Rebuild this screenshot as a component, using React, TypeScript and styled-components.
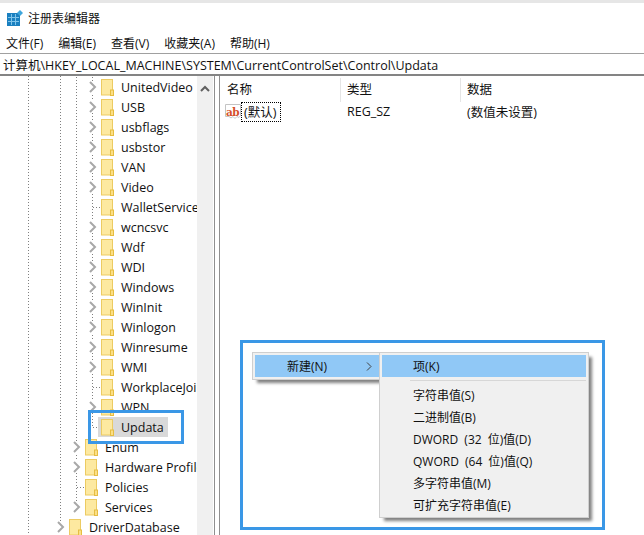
import React from "react";
import styled, { createGlobalStyle } from "styled-components";

const GlobalStyle = createGlobalStyle`
    html, body {
        margin: 0;
        padding: 0;
        background: white;
    }
`;

const UI_FONT = `"Open Sans", "Noto Sans CJK SC", sans-serif`;

type TreeItem = { name: string; expandable: boolean; selected?: boolean };

const controlChildren: TreeItem[] = [
    { name: "UnitedVideo", expandable: true },
    { name: "USB", expandable: true },
    { name: "usbflags", expandable: true },
    { name: "usbstor", expandable: true },
    { name: "VAN", expandable: true },
    { name: "Video", expandable: true },
    { name: "WalletService", expandable: false },
    { name: "wcncsvc", expandable: true },
    { name: "Wdf", expandable: true },
    { name: "WDI", expandable: true },
    { name: "Windows", expandable: true },
    { name: "WinInit", expandable: true },
    { name: "Winlogon", expandable: true },
    { name: "Winresume", expandable: true },
    { name: "WMI", expandable: true },
    { name: "WorkplaceJoin", expandable: false },
    { name: "WPN", expandable: true },
    { name: "Updata", expandable: false, selected: true },
];

const setChildren: TreeItem[] = [
    { name: "Enum", expandable: true },
    { name: "Hardware Profiles", expandable: true },
    { name: "Policies", expandable: false },
    { name: "Services", expandable: true },
];

const newItems = [
    "字符串值(S)",
    "二进制值(B)",
    "DWORD (32 位)值(D)",
    "QWORD (64 位)值(Q)",
    "多字符串值(M)",
    "可扩充字符串值(E)",
];

function RegeditIcon() {
    return (
        <svg width="16" height="16" viewBox="0 0 16 16">
            <rect x="0" y="3" width="13" height="13" fill="#1a80c0" />
            <path d="M1 7.500h11M1 11.500h11M4.500 4v11M8.500 4v11" stroke="#7fc4ea" strokeWidth="1" />
            <path d="M13 0l3 3-3 3-3-3z" fill="#3fa6dc" />
        </svg>
    );
}

function FolderIcon() {
    return (
        <svg width="14" height="17" viewBox="0 0 14 17">
            <rect x="1.500" y="0.500" width="11" height="15.500" fill="#fde9a0" stroke="#eccb62" />
            <rect x="10.500" y="11" width="3" height="5.500" fill="#fbdf86" stroke="#e6bd42" />
        </svg>
    );
}

function ChevronIcon() {
    return (
        <svg width="8" height="12" viewBox="0 0 8 12">
            <path d="M1 1l5 5-5 5" fill="none" stroke="#a8a8a8" strokeWidth="2" />
        </svg>
    );
}

function TreeRow({ item, level }: { item: TreeItem; level: number }) {
    return (
        <Row $level={level}>
            <Expander>{item.expandable ? <ChevronIcon /> : <Connector />}</Expander>
            <Label $selected={item.selected}>
                <FolderIcon />
                <span>{item.name}</span>
            </Label>
        </Row>
    );
}

export default function App() {
    return (
        <Page>
            <GlobalStyle />
            <TitleBar>
                <RegeditIcon />
                <span>注册表编辑器</span>
            </TitleBar>
            <MenuBar>
                <span>文件(F)</span>
                <span>编辑(E)</span>
                <span>查看(V)</span>
                <span>收藏夹(A)</span>
                <span>帮助(H)</span>
            </MenuBar>
            <AddressBar>计算机\HKEY_LOCAL_MACHINE\SYSTEM\CurrentControlSet\Control\Updata</AddressBar>
            <Body>
                <Tree>
                    <Branch $x={76}>
                        <Branch $x={92}>
                            {controlChildren.map((item) => (
                                <TreeRow key={item.name} item={item} level={2} />
                            ))}
                        </Branch>
                        {setChildren.map((item) => (
                            <TreeRow key={item.name} item={item} level={1} />
                        ))}
                    </Branch>
                    <TreeRow item={{ name: "DriverDatabase", expandable: true }} level={0} />
                </Tree>
                <Scrollbar>
                    <svg width="10" height="7" viewBox="0 0 10 7">
                        <path d="M1 6l4-4 4 4" fill="none" stroke="#606060" strokeWidth="2" />
                    </svg>
                </Scrollbar>
                <Splitter />
                <Values>
                    <ColumnHeader>
                        <HeaderCell $width={121} $divider>名称</HeaderCell>
                        <HeaderCell $width={120} $divider>类型</HeaderCell>
                        <HeaderCell $width={120}>数据</HeaderCell>
                    </ColumnHeader>
                    <ValueRow>
                        <NameCell>
                            <StringIcon>
                                <svg width="16" height="17" viewBox="0 0 16 17">
                                    <path d="M0.500 0.500h15v11l-1.500 2-2-1-2 2-2-2-2 1.500-2-1.500h-3.500z" fill="#fff" stroke="#c4c4c4" />
                                </svg>
                                <StringBadge>ab</StringBadge>
                            </StringIcon>
                            <FocusName>(默认)</FocusName>
                        </NameCell>
                        <ValueCell $width={120}>REG_SZ</ValueCell>
                        <ValueCell $width={180}>(数值未设置)</ValueCell>
                    </ValueRow>
                </Values>
            </Body>

            <MarkBox $left={88} $top={410} $width={96} $height={34} />
            <MarkBox $left={240} $top={340} $width={365} $height={190} />

            <ParentMenu>
                <ParentItem>
                    <span>新建(N)</span>
                    <svg width="6" height="9" viewBox="0 0 6 9">
                        <path d="M1 0.500l4 4-4 4" fill="none" stroke="#404040" strokeWidth="1" />
                    </svg>
                </ParentItem>
            </ParentMenu>
            <SubMenu>
                <SubItem $active>项(K)</SubItem>
                <MenuSeparator />
                {newItems.map((text) => (
                    <SubItem key={text}>{text}</SubItem>
                ))}
            </SubMenu>
        </Page>
    );
}

const Page = styled.div`
    position: relative;
    width: 644px;
    height: 535px;
    overflow: hidden;
    display: flex;
    flex-direction: column;
    box-sizing: border-box;
    border-top: 3px solid #e6e6e6;
    background: white;
    color: #111;
    font-family: ${UI_FONT};
    font-size: 12.5px;
`;

const TitleBar = styled.div`
    height: 30px;
    padding-left: 7px;
    display: flex;
    align-items: center;
    gap: 5px;
    font-size: 12px;
`;

const MenuBar = styled.div`
    height: 20px;
    padding-left: 6px;
    display: flex;
    align-items: center;
    gap: 15px;
    font-size: 12px;
`;

const AddressBar = styled.div`
    height: 20px;
    padding-left: 3px;
    display: flex;
    align-items: center;
    border-top: 1px solid #a0a0a0;
    border-bottom: 2px solid #848484;
    white-space: nowrap;
`;

const Body = styled.div`
    flex: 1;
    min-height: 0;
    display: flex;
`;

const Tree = styled.div`
    width: 197px;
    padding-top: 1px;
    overflow: hidden;
    flex-shrink: 0;
    background-image:
        repeating-linear-gradient(to bottom, #808080 0 1px, transparent 1px 3px),
        repeating-linear-gradient(to bottom, #808080 0 1px, transparent 1px 3px);
    background-size: 1px 100%;
    background-repeat: no-repeat;
    background-position: 28px 0, 60px 0;
`;

const Branch = styled.div<{ $x: number }>`
    background-image: repeating-linear-gradient(to bottom, #808080 0 1px, transparent 1px 3px);
    background-size: 1px calc(100% - 10px);
    background-repeat: no-repeat;
    background-position: ${(p) => p.$x}px 0;
`;

const Row = styled.div<{ $level: number }>`
    height: 20px;
    padding-left: ${(p) => 56 + p.$level * 16}px;
    display: flex;
    align-items: center;
    white-space: nowrap;
`;

const Expander = styled.div`
    width: 10px;
    height: 20px;
    flex-shrink: 0;
    display: flex;
    align-items: center;
    justify-content: center;

    svg {
        background: white;
    }
`;

const Connector = styled.div`
    width: 8px;
    margin-left: 8px;
    height: 1px;
    flex-shrink: 0;
    background: repeating-linear-gradient(to right, #808080 0 1px, transparent 1px 3px);
`;

const Label = styled.div<{ $selected?: boolean }>`
    height: 20px;
    padding: 0 4px 0 2px;
    display: flex;
    align-items: center;
    gap: 7px;
    background: ${(p) => (p.$selected ? "#d9d9d9" : "transparent")};
`;

const Scrollbar = styled.div`
    width: 16px;
    flex-shrink: 0;
    padding-top: 9px;
    display: flex;
    justify-content: center;
    align-items: flex-start;
    background: #f0f0f0;
`;

const Splitter = styled.div`
    width: 4px;
    margin-left: 1px;
    flex-shrink: 0;
    border-left: 1px solid #8f8f8f;
    border-right: 1px solid #8f8f8f;
`;

const Values = styled.div`
    flex: 1;
    min-width: 0;
`;

const ColumnHeader = styled.div`
    height: 24px;
    margin-top: 2px;
    display: flex;
`;

const HeaderCell = styled.div<{ $width: number; $divider?: boolean }>`
    width: ${(p) => p.$width}px;
    padding: 0 0 3px 6px;
    box-sizing: border-box;
    display: flex;
    align-items: center;
    border-right: ${(p) => (p.$divider ? "1px solid #e5e5e5" : "none")};

    &:first-child {
        padding-left: 7px;
    }
`;

const ValueRow = styled.div`
    height: 20px;
    display: flex;
    align-items: center;
    white-space: nowrap;
`;

const NameCell = styled.div`
    width: 121px;
    padding-left: 5px;
    box-sizing: border-box;
    display: flex;
    align-items: center;
    flex-shrink: 0;
`;

const StringIcon = styled.div`
    position: relative;
    width: 16px;
    height: 17px;
`;

const StringBadge = styled.span`
    position: absolute;
    left: 1px;
    top: 3px;
    font-family: "DejaVu Serif", serif;
    font-size: 10.500px;
    line-height: 1;
    font-weight: 700;
    letter-spacing: -0.5px;
    color: #d5502a;
`;

const FocusName = styled.span`
    width: 40px;
    height: 20px;
    box-sizing: border-box;
    padding: 0 0 2px 2px;
    display: flex;
    align-items: center;
    border: 1px dotted #000;
`;

const ValueCell = styled.div<{ $width: number }>`
    width: ${(p) => p.$width}px;
    padding: 0 0 2px 6px;
    box-sizing: border-box;
    flex-shrink: 0;
`;

const MarkBox = styled.div<{ $left: number; $top: number; $width: number; $height: number }>`
    position: absolute;
    left: ${(p) => p.$left}px;
    top: ${(p) => p.$top - 3}px;
    width: ${(p) => p.$width}px;
    height: ${(p) => p.$height}px;
    box-sizing: border-box;
    border: 3px solid #3a97e6;
`;

const ParentMenu = styled.div`
    position: absolute;
    left: 252px;
    top: 349px;
    width: 127px;
    box-sizing: border-box;
    padding: 2px 0 2px 2px;
    background: #f0f0f0;
    border: 1px solid #cfcfcf;
    border-right: none;
    box-shadow: 4px 4px 3px -1px #808080;
    font-size: 12px;
`;

const ParentItem = styled.div`
    height: 22px;
    padding: 0 7px 0 32px;
    display: flex;
    align-items: center;
    justify-content: space-between;
    background: #90c8f6;
`;

const SubMenu = styled.div`
    position: absolute;
    left: 379px;
    top: 349px;
    width: 210px;
    height: 166px;
    box-sizing: border-box;
    padding: 2px;
    background: #f0f0f0;
    border: 1px solid #cfcfcf;
    box-shadow: 4px 4px 3px -1px #808080;
    font-size: 12px;
    word-spacing: 3px;
`;

const SubItem = styled.div<{ $active?: boolean }>`
    height: 22px;
    padding-left: 31px;
    display: flex;
    align-items: center;
    white-space: pre;
    background: ${(p) => (p.$active ? "#90c8f6" : "transparent")};
`;

const MenuSeparator = styled.div`
    height: 1px;
    margin: 3px 0 3px 28px;
    background: #d7d7d7;
`;
